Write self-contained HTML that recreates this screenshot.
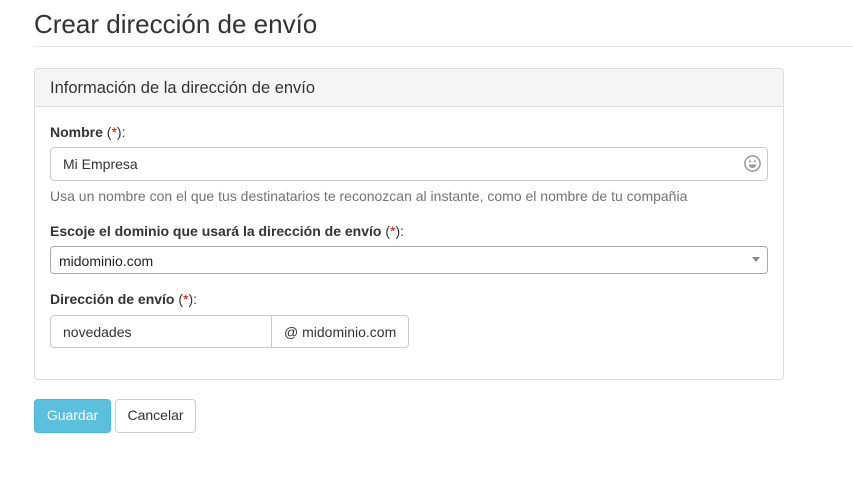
<!DOCTYPE html>
<html><head><meta charset="utf-8"><style>
body{margin:0;background:#fff;font-family:"Liberation Sans",sans-serif;color:#333;font-size:14px;}
.a{position:absolute;}
h1{position:absolute;left:34px;top:9px;margin:0;font-size:26px;font-weight:normal;color:#333;}
.hr{left:34px;top:46px;width:819px;height:1px;background:#e8e8e8;}
.panel{left:34px;top:68px;width:748px;height:310px;border:1px solid #ddd;border-radius:4px;}
.ph{left:0;top:0;width:748px;height:37px;background:#f5f5f5;border-bottom:1px solid #ddd;border-radius:4px 4px 0 0;}
.ph span{position:absolute;left:15px;top:10px;font-size:16.5px;}
label{position:absolute;font-weight:bold;font-size:14px;}
label b{font-weight:normal;}
label i{font-style:normal;color:#e00;}
.inp{border:1px solid #ccc;border-radius:4px;box-sizing:border-box;}
.btn{border-radius:4px;box-sizing:border-box;text-align:center;line-height:31px;}
</style></head><body>
<h1>Crear dirección de envío</h1>
<div class="a hr"></div>
<div class="a panel">
 <div class="a ph"><span>Información de la dirección de envío</span></div>
</div>
<label style="left:50px;top:124px">Nombre <b>(<i>*</i>):</b></label>
<div class="a inp" style="left:50px;top:147px;width:718px;height:34px"><span class="a" style="left:12px;top:8px">Mi Empresa</span>
<svg class="a" style="left:692px;top:6px" width="19" height="19" viewBox="0 0 19 19"><circle cx="9.5" cy="9.5" r="7.6" fill="none" stroke="#999" stroke-width="1.5"/><circle cx="7" cy="7.3" r="1.1" fill="#999"/><circle cx="12" cy="7.3" r="1.1" fill="#999"/><path d="M5.8 10.5h7.4c0 2.1-1.6 3.5-3.7 3.5S5.8 12.6 5.8 10.5z" fill="#999"/></svg></div>
<div class="a" style="left:50px;top:188px;color:#737373">Usa un nombre con el que tus destinatarios te reconozcan al instante, como el nombre de tu compañia</div>
<label style="left:50px;top:223px">Escoje el dominio que usará la dirección de envío <b>(<i>*</i>):</b></label>
<div class="a inp" style="left:50px;top:246px;width:718px;height:28px;border-color:#aaa"><span class="a" style="left:8px;top:6px;color:#222">midominio.com</span>
<div class="a" style="left:701px;top:10px;width:0;height:0;border-left:4px solid transparent;border-right:4px solid transparent;border-top:5px solid #888"></div></div>
<label style="left:50px;top:291px">Dirección de envío <b>(<i>*</i>):</b></label>
<div class="a inp" style="left:50px;top:315px;width:222px;height:33px;border-radius:4px 0 0 4px"><span class="a" style="left:12px;top:8px">novedades</span></div>
<div class="a inp" style="left:271px;top:315px;width:138px;height:33px;border-radius:0 4px 4px 0"><span class="a" style="left:12px;top:8px">@ midominio.com</span></div>
<div class="a btn" style="left:34px;top:399px;width:77px;height:34px;background:#5bc0de;border:1px solid #46b8da;color:#fff">Guardar</div>
<div class="a btn" style="left:115px;top:399px;width:81px;height:34px;background:#fff;border:1px solid #ccc">Cancelar</div>
</body></html>
